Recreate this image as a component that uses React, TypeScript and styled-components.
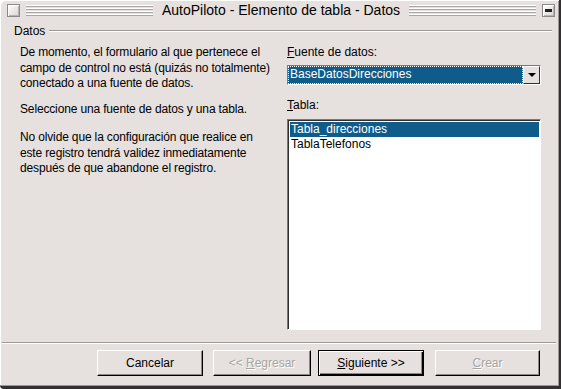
import React from "react";
import styled, { createGlobalStyle } from "styled-components";

const Global = createGlobalStyle`
  html, body { margin: 0; padding: 0; background: #ffffff; }
  #root { width: 561px; height: 389px; }
  * { box-sizing: border-box; }
`;

const FONT = `"Liberation Sans", Arial, sans-serif`;
const BG = "#e6e1df";
const BLUE = "#0f5b8a";

const Window = styled.div`
  width: 561px;
  height: 389px;
  background: ${BG};
  display: flex;
  flex-direction: column;
  border-top-left-radius: 5px;
  border-right: 2px solid #303030;
  border-bottom: 3px solid #303030;
  border-bottom-left-radius: 4px;
  box-shadow: inset 1px 1px 0 #ffffff, inset -1px -1px 0 #9c9896;
  font-family: ${FONT};
  color: #000;
  overflow: hidden;
`;

const TitleBar = styled.div`
  height: 20px;
  flex: none;
  display: flex;
  align-items: center;
  padding: 0 4px 0 7px;
  gap: 6px;
`;

const TitleButton = styled.div`
  width: 13px;
  height: 13px;
  flex: none;
  border: 1px solid #8c8888;
  background: linear-gradient(135deg, #ffffff 0%, #d8d4d2 100%);
  box-shadow: inset 1px 1px 0 #ffffff, inset -1px -1px 0 #b8b4b2;
  display: flex;
  align-items: center;
  justify-content: center;
`;

const MinusGlyph = styled.div`
  width: 7px;
  height: 3px;
  background: #202020;
`;

const Grooves = styled.div`
  flex: 1;
  height: 11px;
  background: repeating-linear-gradient(
    to bottom,
    #ffffff 0px,
    #ffffff 1px,
    #aaa6a4 1px,
    #aaa6a4 2px,
    transparent 2px,
    transparent 3px
  );
`;

const Title = styled.div`
  font-size: 14px;
  white-space: nowrap;
  padding: 0 3px;
`;

const Legend = styled.div`
  display: flex;
  align-items: center;
  gap: 4px;
  padding: 2px 7px 0 14px;
  height: 19px;
  flex: none;
  font-size: 12px;
`;

const LegendLine = styled.div`
  flex: 1;
  height: 2px;
  border-top: 1px solid #9c9896;
  border-bottom: 1px solid #ffffff;
`;

const Content = styled.div`
  flex: 1;
  display: grid;
  grid-template-columns: 267px 254px;
  padding: 6px 0 0 20px;
  min-height: 0;
`;

const TextCol = styled.div`
  display: flex;
  flex-direction: column;
  gap: 10.5px;
`;

const Para = styled.p<{ $extra?: number }>`
  margin: ${(p) => p.$extra ?? 0}px 0 0 0;
  font-size: 12px;
  line-height: 15.5px;
  letter-spacing: -0.15px;
`;

const Side = styled.div`
  display: flex;
  flex-direction: column;
`;

const Label = styled.div<{ $h: number }>`
  font-size: 12px;
  line-height: 14px;
  height: ${(p) => p.$h}px;
`;

const U = styled.span`
  text-decoration: underline;
`;

const Combo = styled.div`
  height: 20px;
  display: flex;
  border: 1px solid;
  border-color: #7c7876 #ffffff #ffffff #7c7876;
  background: #ffffff;
  margin-bottom: 13px;
`;

const ComboValue = styled.div`
  flex: 1;
  background: ${BLUE};
  color: #ffffff;
  font-size: 12px;
  line-height: 17px;
  padding: 0 2px;
  outline: 1px dotted #ffffff;
  outline-offset: -1px;
`;

const ComboButton = styled.div`
  width: 17px;
  flex: none;
  background: ${BG};
  border: 1px solid;
  border-color: #ffffff #303030 #303030 #ffffff;
  display: flex;
  align-items: center;
  justify-content: center;
`;

const Arrow = styled.div`
  width: 0;
  height: 0;
  border-left: 4px solid transparent;
  border-right: 4px solid transparent;
  border-top: 4px solid #000;
`;

const ListBox = styled.div`
  height: 211px;
  background: #ffffff;
  border: 1px solid;
  border-color: #7c7876 #ffffff #ffffff #7c7876;
  box-shadow: inset 1px 1px 0 #303030;
  padding: 2px 1px 0 2px;
`;

const ListItem = styled.div<{ $selected?: boolean }>`
  font-size: 12px;
  line-height: 15px;
  height: 15px;
  padding: 0 1px;
  background: ${(p) => (p.$selected ? BLUE : "transparent")};
  color: ${(p) => (p.$selected ? "#ffffff" : "#000")};
`;

const Separator = styled.div`
  height: 2px;
  flex: none;
  margin: 0 3px 0 2px;
  border-top: 1px solid #9c9896;
  border-bottom: 1px solid #ffffff;
`;

const ButtonRow = styled.div`
  flex: none;
  height: 42px;
  display: flex;
  justify-content: flex-start;
  align-items: flex-start;
  padding: 6px 0 0 97px;
`;

const Button = styled.div<{ $default?: boolean; $disabled?: boolean; $w: number; $ml?: number }>`
  width: ${(p) => p.$w}px;
  margin-left: ${(p) => p.$ml ?? 0}px;
  height: 26px;
  display: flex;
  align-items: center;
  justify-content: center;
  font-size: 12px;
  background: ${BG};
  color: ${(p) => (p.$disabled ? "#a8a4a2" : "#000")};
  text-shadow: ${(p) => (p.$disabled ? "1px 1px 0 #ffffff" : "none")};
  border: 1px solid;
  border-color: ${(p) => (p.$default ? "#000" : "#ffffff #000 #000 #ffffff")};
  box-shadow: ${(p) =>
    p.$default
      ? "inset 1px 1px 0 #ffffff, inset -1px -1px 0 #000, inset -2px -2px 0 #8c8886"
      : "inset -1px -1px 0 #8c8886"};
`;

export default function App() {
  return (
    <>
      <Global />
      <Window>
        <TitleBar>
          <TitleButton />
          <Grooves />
          <Title>AutoPiloto - Elemento de tabla - Datos</Title>
          <Grooves />
          <TitleButton>
            <MinusGlyph />
          </TitleButton>
        </TitleBar>
        <Legend>
          <span>Datos</span>
          <LegendLine />
        </Legend>
        <Content>
          <TextCol>
            <Para>
              De momento, el formulario al que pertenece el
              <br />
              campo de control no está (quizás no totalmente)
              <br />
              conectado a una fuente de datos.
            </Para>
            <Para>Seleccione una fuente de datos y una tabla.</Para>
            <Para $extra={2}>
              No olvide que la configuración que realice en
              <br />
              este registro tendrá validez inmediatamente
              <br />
              después de que abandone el registro.
            </Para>
          </TextCol>
          <Side>
            <Label $h={20}>
              <U>F</U>uente de datos:
            </Label>
            <Combo>
              <ComboValue>BaseDatosDirecciones</ComboValue>
              <ComboButton>
                <Arrow />
              </ComboButton>
            </Combo>
            <Label $h={21}>
              <U>T</U>abla:
            </Label>
            <ListBox>
              <ListItem $selected>Tabla_direcciones</ListItem>
              <ListItem>TablaTelefonos</ListItem>
            </ListBox>
          </Side>
        </Content>
        <Separator />
        <ButtonRow>
          <Button $w={106}>Cancelar</Button>
          <Button $w={98} $ml={10} $disabled>
            &lt;&lt;&nbsp;<U>R</U>egresar
          </Button>
          <Button $w={106} $ml={7} $default>
            <U>S</U>iguiente &gt;&gt;
          </Button>
          <Button $w={105} $ml={11} $disabled>
            <U>C</U>rear
          </Button>
        </ButtonRow>
      </Window>
    </>
  );
}
